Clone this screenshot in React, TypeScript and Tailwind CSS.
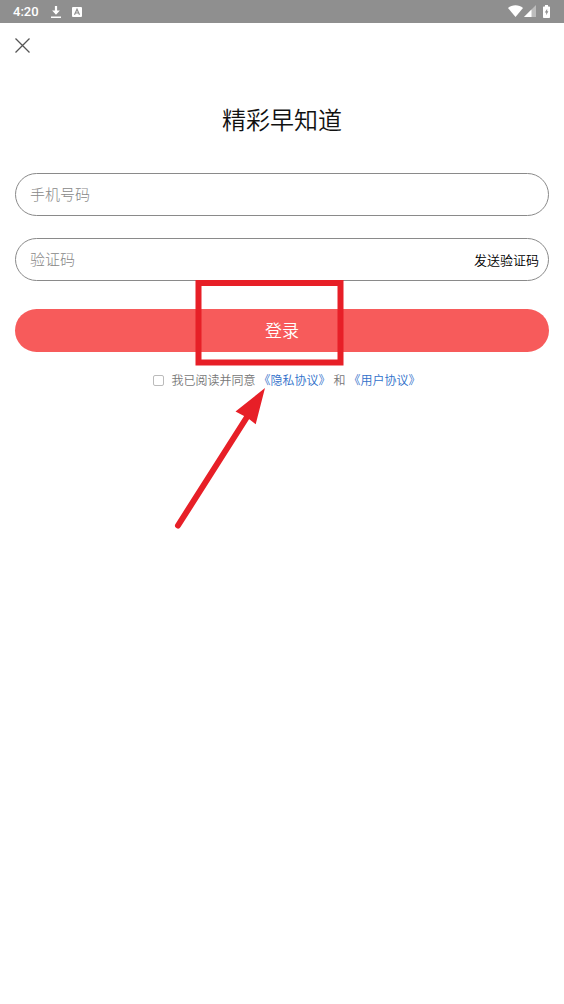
import React, { useState } from 'react';

const AGREEMENTS = {
  privacy: '《隐私协议》',
  user: '《用户协议》',
};

function StatusBar() {
  return (
    <header className="flex h-[23px] items-center justify-between bg-[#8f8f8f] pl-[13px] pr-[14px] text-white">
      <div className="flex items-center">
        <span className="font-[Roboto,sans-serif] text-[13px] font-medium leading-5">4:20</span>
        <svg className="ml-3 h-3 w-[10px]" viewBox="0 0 10 12" fill="currentColor" aria-hidden="true">
          <path d="M3.9 0h2.2v4.5h2.8L5 8.8 1.1 4.5h2.8zM0 10.6h10V12H0z" />
        </svg>
        <svg className="ml-[11px] h-[10px] w-[10px]" viewBox="0 0 10 10" aria-hidden="true">
          <path d="M1 0h8a1 1 0 0 1 1 1v8a1 1 0 0 1-1 1H1a1 1 0 0 1-1-1V1a1 1 0 0 1 1-1z" fill="currentColor" />
          <path d="M2.5 7.8 5 2.3l2.5 5.5M3.5 6h3" fill="none" stroke="#8f8f8f" strokeWidth="1.2" />
        </svg>
      </div>
      <div className="flex items-center pb-px">
        <svg className="h-3 w-[15px]" viewBox="0 0 15 12" fill="currentColor" aria-hidden="true">
          <path d="M7.5 12 0 3C2 1.2 4.6.3 7.5.3S13 1.2 15 3z" />
        </svg>
        <svg className="ml-px h-3 w-3" viewBox="0 0 12 12" fill="currentColor" aria-hidden="true">
          <path d="M12 0v12H0z" opacity=".4" />
          <path d="M7.5 4.5V12H0z" />
        </svg>
        <svg className="ml-[7px] h-[13px] w-[7px]" viewBox="0 0 7 14" preserveAspectRatio="none" aria-hidden="true">
          <path d="M2 0h3v1.5h1.2a.8.8 0 0 1 .8.8v10.9a.8.8 0 0 1-.8.8H.8a.8.8 0 0 1-.8-.8V2.3a.8.8 0 0 1 .8-.8H2z" fill="currentColor" />
          <path d="M4.2 4 1.8 8.2h1.4V11l2.2-4.2H4.2z" fill="#8f8f8f" />
        </svg>
      </div>
    </header>
  );
}

// Red frame and arrow that point the reader at the login button
function Callout() {
  return (
    <svg
      className="pointer-events-none absolute -top-8 left-1/2 -ml-28 h-[260px] w-[180px]"
      viewBox="0 0 180 260"
      aria-hidden="true"
    >
      <rect x="28.5" y="6" width="142" height="79.5" fill="none" stroke="#e71f27" strokeWidth="6" />
      <path d="M8 248.5 77 140" stroke="#e71f27" strokeWidth="6" strokeLinecap="round" />
      <path d="M95 111 65.5 134.5 75 139.5 79 142 85.7 147.3z" fill="#e71f27" />
    </svg>
  );
}

export default function App() {
  const [phone, setPhone] = useState('');
  const [code, setCode] = useState('');
  const [agreed, setAgreed] = useState(false);

  return (
    <div className="min-h-screen bg-white font-['Noto_Sans_CJK_SC',sans-serif] font-[350]">
      <StatusBar />

      <main className="px-[15px]">
        <button type="button" aria-label="关闭" className="mt-[15px] block text-[#555]">
          <svg className="h-[15px] w-[15px]" viewBox="0 0 15 15" fill="none" stroke="currentColor" strokeWidth="1.3" aria-hidden="true">
            <path d="M.5.5l14 14M14.5.5l-14 14" />
          </svg>
        </button>

        <h1 className="mt-12 text-center text-2xl font-[350] leading-9 text-[#111]">精彩早知道</h1>

        <form onSubmit={(e) => e.preventDefault()} className="mt-9">
          <input
            type="tel"
            aria-label="手机号码"
            placeholder="手机号码"
            value={phone}
            onChange={(e) => setPhone(e.target.value)}
            className="block h-[43px] w-full rounded-full border border-[#8a8a8a] px-[14px] pb-[2px] text-[15px] font-light text-[#222] outline-none placeholder:text-[#888]"
          />

          <div className="mt-[22px] flex h-[43px] items-center rounded-full border border-[#8a8a8a] pl-[14px] pr-[9px]">
            <input
              type="text"
              aria-label="验证码"
              placeholder="验证码"
              value={code}
              onChange={(e) => setCode(e.target.value)}
              className="min-w-0 flex-1 text-[15px] font-light text-[#222] outline-none placeholder:text-[#888]"
            />
            <button type="button" className="shrink-0 text-[13px] text-black">
              发送验证码
            </button>
          </div>

          <div className="relative mt-7">
            <button type="submit" className="block h-[43px] w-full rounded-full bg-[#f75b5b] pb-[2px] text-[17px] text-white">
              登录
            </button>
            <Callout />
          </div>

          <div className="mt-[18px] flex items-center justify-center gap-[3px] pl-[10px] text-xs leading-5 text-[#777]">
            <input
              id="agree"
              type="checkbox"
              checked={agreed}
              onChange={(e) => setAgreed(e.target.checked)}
              className="mr-1 h-[11px] w-[11px] appearance-none rounded-[2px] border border-[#bbb] checked:bg-[#f75b5b]"
            />
            <label htmlFor="agree">我已阅读并同意</label>
            <a href="#privacy" className="text-[#2f6fca]">{AGREEMENTS.privacy}</a>
            <span>和</span>
            <a href="#user" className="text-[#2f6fca]">{AGREEMENTS.user}</a>
          </div>
        </form>
      </main>
    </div>
  );
}
